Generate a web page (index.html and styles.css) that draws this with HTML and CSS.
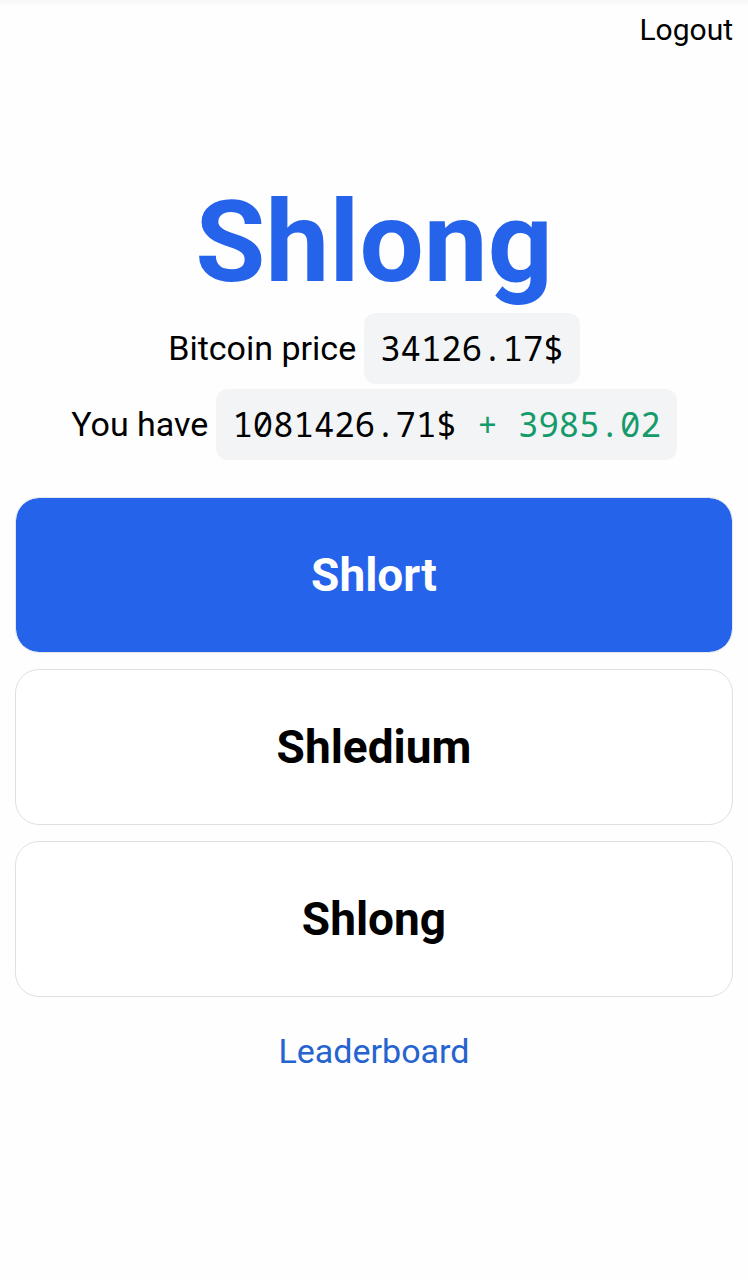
FILE: index.html
```html
<!DOCTYPE html>
<html lang="en">
<head>
<meta charset="utf-8">
<meta name="viewport" content="width=device-width, initial-scale=1">
<title>Shlong</title>
<link rel="stylesheet" href="styles.css">
</head>
<body>
<header class="topbar"><button class="logout" type="button">Logout</button></header>
<main class="game">
<h1 class="title">Shlong</h1>
<p class="stat">Bitcoin price <code class="value">34126.17$</code></p>
<p class="stat">You have <code class="value">1081426.71$ <span class="gain">+ 3985.02</span></code></p>
<div class="choices">
<button class="choice choice-active" type="button">Shlort</button>
<button class="choice" type="button">Shledium</button>
<button class="choice" type="button">Shlong</button>
</div>
<a class="leaderboard" href="#leaderboard">Leaderboard</a>
</main>
</body>
</html>
```
FILE: styles.css
```css
* {
  box-sizing: border-box;
}

body {
  margin: 0;
  background: #fefefe;
  color: #000;
  font-family: Roboto, sans-serif;
  font-size: 34px;
  line-height: 47px;
}

button {
  font: inherit;
  color: inherit;
  cursor: pointer;
}

.topbar {
  display: flex;
  justify-content: flex-end;
  padding: 8px 15px 0;
  background: linear-gradient(#f7f7f7, #fefefe 8px);
}

.logout {
  padding: 0;
  border: 0;
  background: none;
  font-size: 30px;
  line-height: 44px;
}

.game {
  display: flex;
  flex-direction: column;
  align-items: center;
  padding: 124px 15px 0;
}

.title {
  margin: 0;
  color: #2563eb;
  font-size: 114px;
  font-weight: 700;
  line-height: 132px;
}

.stat {
  display: flex;
  align-items: center;
  gap: 8px;
  margin: 5px 0 0;
}

.value {
  padding: 12px 16px;
  border-radius: 12px;
  background: #f2f4f6;
  font-family: "Noto Sans Mono", "DejaVu Sans Mono", monospace;
  font-size: 34px;
  font-feature-settings: "zero" 0;
}

.gain {
  color: #159a6a;
}

.choices {
  display: flex;
  flex-direction: column;
  gap: 16px;
  width: 100%;
  margin-top: 37px;
}

.choice {
  padding: 52px 16px;
  border: 1px solid #dfe0e2;
  border-radius: 24px;
  background: #fff;
  font-size: 46px;
  font-weight: 700;
  line-height: 50px;
}

.choice-active {
  border-color: #e5e7eb;
  background: #2563eb;
  background-clip: padding-box;
  color: #fff;
}

.leaderboard {
  margin-top: 31px;
  color: #2563cf;
  text-decoration: none;
}
```
